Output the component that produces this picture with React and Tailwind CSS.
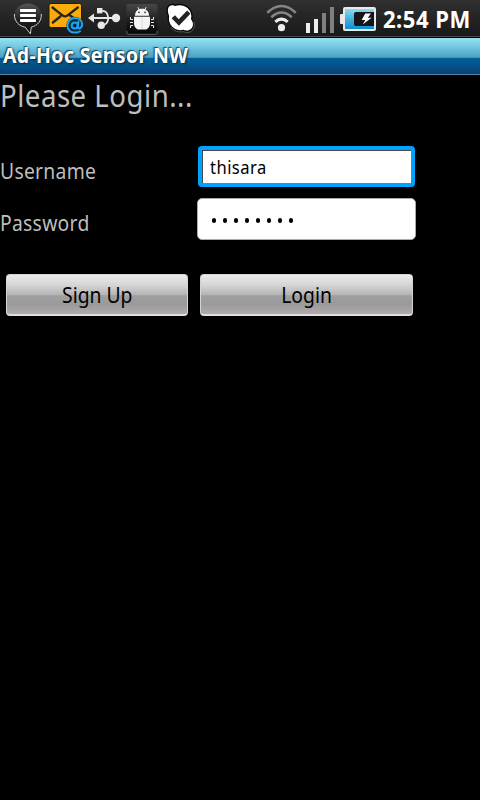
import React from "react";

function BubbleIcon() {
  return (
    <svg width="30" height="36" viewBox="0 0 30 36" className="shrink-0">
      <defs>
        <linearGradient id="bubble" x1="0" y1="0" x2="0" y2="1">
          <stop offset="0" stopColor="#555" />
          <stop offset="0.5" stopColor="#222" />
          <stop offset="1" stopColor="#050505" />
        </linearGradient>
      </defs>
      <path d="M15 3.6C22.5 3.6 28.3 8.8 28.3 15.5C28.3 21.5 24 25.8 18.3 27L17.3 34L12 27.1C5.8 26 1.5 21.5 1.5 15.5C1.5 8.8 7.5 3.6 15 3.6Z" fill="url(#bubble)" />
      <path d="M1.4 14C1.2 21.5 6 26 12.2 27.2L17.4 33.8L18.2 27.1C24.3 25.8 28.6 21 28.4 14" fill="none" stroke="#e2e2e2" strokeWidth="0.9" />
      <rect x="7" y="9" width="16" height="3" rx="0.8" fill="#fff" />
      <rect x="7" y="14" width="16" height="3" rx="0.8" fill="#fff" />
      <rect x="7" y="19" width="16" height="3" rx="0.8" fill="#fff" />
    </svg>
  );
}

function MailIcon() {
  return (
    <svg width="36" height="36" viewBox="0 0 36 36" className="shrink-0">
      <rect x="1" y="3.5" width="32.5" height="24" rx="2" fill="#fbac0b" stroke="#241a08" strokeWidth="1" />
      <path d="M4.5 7.5L14.7 15.6Q17 17.2 19.3 15.6L29.8 7.5M4.8 22.5L12.3 16.5M28.5 20L22 15.5" fill="none" stroke="#29241b" strokeWidth="2.4" strokeLinecap="round" />
      <circle cx="27" cy="25.3" r="8.6" fill="#08283c" />
      <circle cx="26.7" cy="25.4" r="3" fill="none" stroke="#21a2ec" strokeWidth="2" />
      <path d="M30.4 21.5L29.8 26.9C29.6 29.4 34 28.9 34.2 24.3C34.2 20.5 31 18 27.2 18C22.6 18 19.4 21.3 19.4 25.6C19.4 29.8 22.6 32.6 27 32.6Q30 32.6 32 31.2" fill="none" stroke="#21a2ec" strokeWidth="2" strokeLinecap="round" />
    </svg>
  );
}

function UsbIcon() {
  return (
    <svg width="34" height="36" viewBox="0 0 34 36" className="shrink-0">
      <path d="M5 18H28" stroke="#e8e8e8" strokeWidth="2" />
      <path d="M12 10.8H14.5C18.5 10.8 19.8 13.5 20.4 18C19.8 22.5 18.5 25.3 14 25.3" fill="none" stroke="#e8e8e8" strokeWidth="1.8" />
      <path d="M0 18L6 13.6V22.4Z" fill="#e8e8e8" />
      <rect x="9" y="8" width="5.4" height="5.4" fill="#e8e8e8" />
      <circle cx="13.3" cy="25.3" r="3.7" fill="#e8e8e8" />
      <circle cx="28" cy="18" r="4.2" fill="#e8e8e8" />
    </svg>
  );
}

function BugIcon() {
  return (
    <svg width="32" height="36" viewBox="0 0 32 36" className="shrink-0">
      <defs>
        <linearGradient id="tile" x1="0" y1="0" x2="0" y2="1">
          <stop offset="0" stopColor="#484848" />
          <stop offset="0.55" stopColor="#1d1d1d" />
          <stop offset="1" stopColor="#050505" />
        </linearGradient>
      </defs>
      <rect x="0.5" y="4" width="31" height="30.5" rx="2" fill="url(#tile)" />
      <path d="M0.8 31V33Q1 34.3 2.5 34.3H29.5Q31 34.3 31.2 33V31" fill="none" stroke="#777" strokeWidth="0.8" />
      <path d="M12 7.2L13.3 10M20 7.2L18.7 10" stroke="#f2f2f2" strokeWidth="1" />
      <path d="M9 15.7C9 11.5 11.8 8.8 16 8.8C20.2 8.8 23 11.5 23 15.7Z" fill="#f5f5f5" />
      <circle cx="13" cy="12.4" r="0.8" fill="#222" />
      <circle cx="19" cy="12.4" r="0.8" fill="#222" />
      <path d="M8 16.7H24V23C24 27 21.8 29.6 18.6 29.6H13.4C10.2 29.6 8 27 8 23Z" fill="#f5f5f5" />
      <path d="M16 17V29" stroke="#dadada" strokeWidth="1" />
      <path d="M7 19.5H4.5V17M7 22.5H4M7 25.5H4.5V28M25 19.5H27.5V17M25 22.5H28M25 25.5H27.5V28" fill="none" stroke="#e6e6e6" strokeWidth="1" />
    </svg>
  );
}

function CheckIcon() {
  return (
    <svg width="30" height="36" viewBox="0 0 30 36" className="shrink-0">
      <path d="M2 9C2.3 5.5 6 4.2 9.2 5.9C13 4.5 18.5 5 21.8 8.2C25 11.3 26 15.5 25 19.3C27.6 22.5 27.6 26 25.4 28.6C22.8 31.3 19.5 30.8 17.2 29.8C12 31 7.3 28.8 4.8 25C2.9 22 2.6 19 3.2 16C2 13.5 1.7 11 2 9Z" fill="#fff" stroke="#080808" strokeWidth="2.6" className="[paint-order:stroke]" />
      <path d="M27.8 22C29.4 27 27.2 31.7 22.7 32.4Q20 32.7 17.5 31.7Q10 33 5 27.5" fill="none" stroke="#666" strokeWidth="0.8" />
      <path d="M5.6 18.3L9 15.2L12.7 19.2L21.2 10.4L24.4 13.8L12.9 25.7Z" fill="#222" />
    </svg>
  );
}

function WifiIcon() {
  return (
    <svg width="32" height="36" viewBox="0 0 32 36" className="shrink-0">
      <path d="M1.3 12.8Q15.5 -0.8 29.7 12.8" fill="none" stroke="#858585" strokeWidth="2.6" />
      <path d="M5.3 17.2Q15.5 7.8 25.7 17.2" fill="none" stroke="#858585" strokeWidth="2.6" />
      <path d="M9.3 21.8Q15.5 16.4 21.7 21.8" fill="none" stroke="#ededed" strokeWidth="3" />
      <circle cx="15.5" cy="27.7" r="3.6" fill="#ededed" />
    </svg>
  );
}

function SignalIcon() {
  return (
    <svg width="30" height="36" viewBox="0 0 30 36" className="shrink-0">
      <rect x="1" y="23" width="4" height="10" fill="#eee" />
      <rect x="9" y="19" width="4" height="14" fill="#eee" />
      <rect x="17" y="13" width="4" height="20" fill="#808080" />
      <rect x="25" y="7" width="4" height="26" fill="#808080" />
    </svg>
  );
}

function BatteryIcon() {
  return (
    <svg width="37" height="36" viewBox="0 0 37 36" className="shrink-0">
      <defs>
        <linearGradient id="charge" x1="0" y1="0" x2="0" y2="1">
          <stop offset="0" stopColor="#9bdcf5" />
          <stop offset="0.5" stopColor="#41b0e0" />
          <stop offset="1" stopColor="#078fcf" />
        </linearGradient>
      </defs>
      <rect x="0" y="14" width="5" height="10" rx="1" fill="#e9e9e9" />
      <rect x="4" y="8" width="31" height="22" rx="1" fill="url(#charge)" stroke="#e9e9e9" strokeWidth="2" />
      <path d="M34 12H16Q14 12 14 14V24Q14 26 16 26H34Z" fill="#161616" />
      <path d="M25.3 13.5H31L27.8 17.8H31.6L22.7 24.6L25.3 20H21.6Z" fill="#fff" />
    </svg>
  );
}

function StatusBar() {
  return (
    <div className="flex h-[38px] border-b border-black bg-black">
      <div className="flex h-[37px] w-full items-start border-b border-[#4c4c4c] bg-linear-to-b from-[#303030] to-[#191919]">
        <div className="flex w-[265px] pl-[13px]">
          <BubbleIcon />
          <div className="ml-[5px] flex"><MailIcon /></div>
          <div className="ml-1 flex"><UsbIcon /></div>
          <div className="ml-1 flex"><BugIcon /></div>
          <div className="ml-2 flex"><CheckIcon /></div>
        </div>
        <div className="flex pl-px">
          <WifiIcon />
          <div className="ml-[7px] flex"><SignalIcon /></div>
          <div className="ml-[5px] flex"><BatteryIcon /></div>
        </div>
        <span className="ml-[6px] mt-px origin-left scale-x-[0.96] whitespace-nowrap text-[23px] leading-[37px] font-bold tracking-[0.5px] text-white">2:54 PM</span>
      </div>
    </div>
  );
}

const buttonClass =
  "flex h-[42px] items-center justify-center rounded-[4px] border border-[#d4d4d4] border-b-2 border-b-[#e0dede] bg-[linear-gradient(to_bottom,#ececec_0%,#d6d6d6_25%,#b4b4b4_51%,#a09f9f_53%,#9b9a9a_75%,#b2abae_100%)] text-[21px] leading-[30px] text-black";

export default function App() {
  return (
    <div className="h-[800px] w-[480px] overflow-hidden bg-black font-['Noto_Sans','Open_Sans',sans-serif] text-[#bebebe]">
      <StatusBar />
      <header className="flex h-[37px] items-center border-b border-[#5784a5] bg-[linear-gradient(to_bottom,#93e2f3_0%,#79cde5_20%,#4c9fc0_54%,#00609a_55%,#094174_100%)] pb-[2px] pl-[3px]">
        <h1 className="origin-left scale-x-[0.93] whitespace-nowrap text-[21px] leading-[30px] font-bold tracking-[0.35px] text-white [text-shadow:1px_1px_2px_#123,-1px_-1px_1px_#1b4657]">Ad-Hoc Sensor NW</h1>
      </header>
      <main>
        <h2 className="h-[69px] w-max origin-left scale-x-[0.92] whitespace-nowrap text-[30px] leading-[42px] tracking-[0.55px]">Please Login...</h2>
        <form className="flex flex-col" onSubmit={(e) => e.preventDefault()}>
          <div className="flex h-[52px] items-start">
            <div className="flex w-[198px] pt-3">
              <label className="origin-left scale-x-[0.92] text-[21px] leading-[30px] tracking-[0.3px]">Username</label>
            </div>
            <div className="mt-[2px] flex h-[41px] w-[217px] rounded-[4px] bg-[#00a2ff] p-1">
              <div className="flex w-full items-center border-t border-l border-[#484848] bg-white pl-[7px] text-black">
                <span className="origin-left scale-x-[0.92] text-[18px] leading-[26px] tracking-[0.5px]">thisara</span>
              </div>
            </div>
          </div>
          <div className="flex h-[78px] items-start">
            <div className="flex w-[197px] pt-3">
              <label className="origin-left scale-x-[0.92] text-[21px] leading-[30px] tracking-[0.3px]">Password</label>
            </div>
            <div className="mt-[2px] flex h-[42px] w-[219px] items-center gap-[7px] rounded-[5px] border border-[#aaa] bg-white pt-[3px] pl-[14px]">
              {Array.from({ length: 8 }, (_, i) => (
                <span key={i} className="h-[5px] w-1 rounded-full bg-black" />
              ))}
            </div>
          </div>
          <div className="flex gap-[12px] pl-[6px]">
            <button className={buttonClass + " w-[182px]"}><span className="scale-x-[0.92]">Sign Up</span></button>
            <button className={buttonClass + " w-[213px]"}><span className="scale-x-[0.92]">Login</span></button>
          </div>
        </form>
      </main>
    </div>
  );
}
